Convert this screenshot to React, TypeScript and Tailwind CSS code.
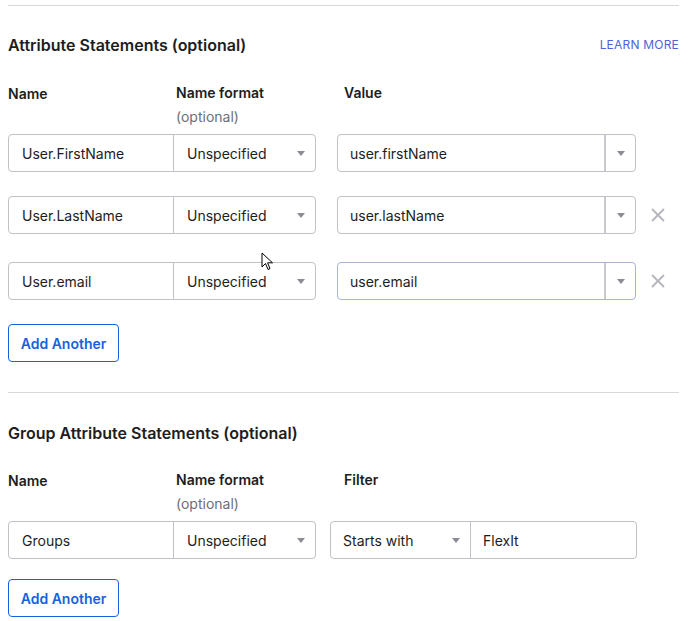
import React from "react";

const Caret = () => (
  <svg width="8" height="5" viewBox="0 0 8 5" className="shrink-0">
    <path d="M0 0 L8 0 L4 5 Z" fill="#8c8c96" />
  </svg>
);

const XIcon = () => (
  <svg width="14" height="14" viewBox="0 0 14 14">
    <path d="M1.5 1.5 L12.5 12.5 M12.5 1.5 L1.5 12.5" stroke="#b5b5bd" strokeWidth="1.8" strokeLinecap="round" />
  </svg>
);

const NameAndFormat = ({ name }: { name: string }) => (
  <div className="flex h-[38px] w-[308px] rounded-[4px] border border-[#c1c1c8]">
    <div className="flex w-[165px] items-center border-r border-[#c1c1c8] pl-[13px] text-[14px]">{name}</div>
    <div className="flex flex-1 items-center justify-between pl-[13px] pr-[10px] text-[14px]">
      <span>Unspecified</span>
      <Caret />
    </div>
  </div>
);

const ValueCombo = ({ value, focused }: { value: string; focused?: boolean }) => (
  <div className={`flex h-[38px] w-[299px] rounded-[4px] border ${focused ? "border-[#a9b4d4]" : "border-[#c1c1c8]"}`}>
    <div className="flex flex-1 items-center border-r-2 border-[#c8c8ce] pl-[12px] text-[14px]">{value}</div>
    <div className="flex w-[29px] items-center justify-center">
      <Caret />
    </div>
  </div>
);

const AttrRow = ({ name, value, removable, focused }: { name: string; value: string; removable?: boolean; focused?: boolean }) => (
  <div className="flex items-center">
    <NameAndFormat name={name} />
    <div className="ml-[21px]">
      <ValueCombo value={value} focused={focused} />
    </div>
    {removable && (
      <div className="ml-[15px] flex items-center">
        <XIcon />
      </div>
    )}
  </div>
);

const Headers = ({ third }: { third: string }) => (
  <div className="flex text-[14px] font-semibold">
    <div className="w-[168px]">Name</div>
    <div className="w-[168px]">
      <div className="h-[20px] leading-[20px]">Name format</div>
      <div className="mt-[4px] h-[20px] font-normal leading-[20px] text-[#6e6e78]">(optional)</div>
    </div>
    <div className="h-[20px] leading-[20px]">{third}</div>
  </div>
);

const AddButton = () => (
  <button className="flex h-[38px] w-[111px] items-center justify-center rounded-[4px] border border-[#1662dd] text-[14px] font-semibold text-[#1662dd]">
    Add Another
  </button>
);

export default function App() {
  return (
    <div className="relative h-[621px] w-[688px] overflow-hidden bg-white pl-[8px] font-['Inter',sans-serif] text-[#1d1d21]">
      <div className="h-[5px]" />
      <div className="w-[671px] border-t border-[#d7d7dc]" />
      <div className="mt-[29px] flex h-[20px] w-[671px] items-center justify-between">
        <div className="text-[16px] font-semibold">Attribute Statements (optional)</div>
        <a className="text-[12px] tracking-[0.2px] text-[#4f63d9]">LEARN MORE</a>
      </div>
      <div className="mt-[28px]">
        <Headers third="Value" />
      </div>
      <div className="mt-[7px] flex flex-col gap-[24px]">
        <AttrRow name="User.FirstName" value="user.firstName" />
        <AttrRow name="User.LastName" value="user.lastName" removable />
        <div className="mt-[4px]">
          <AttrRow name="User.email" value="user.email" removable focused />
        </div>
      </div>
      <div className="mt-[24px]">
        <AddButton />
      </div>
      <div className="mt-[30px] w-[671px] border-t border-[#d7d7dc]" />
      <div className="mt-[30px] flex h-[20px] items-center">
        <div className="text-[16px] font-semibold">Group Attribute Statements (optional)</div>
      </div>
      <div className="mt-[27px]">
        <Headers third="Filter" />
      </div>
      <div className="mt-[7px] flex items-center">
        <NameAndFormat name="Groups" />
        <div className="ml-[14px] flex h-[38px] w-[307px] rounded-[4px] border border-[#c1c1c8]">
          <div className="flex w-[140px] items-center justify-between border-r border-[#c1c1c8] pl-[12px] pr-[10px] text-[14px]">
            <span>Starts with</span>
            <Caret />
          </div>
          <div className="flex flex-1 items-center pl-[12px] text-[14px]">FlexIt</div>
        </div>
      </div>
      <div className="mt-[20px]">
        <AddButton />
      </div>
      <svg className="absolute left-[261px] top-[252px]" width="13" height="20" viewBox="0 0 13 20">
        <path d="M1 1 L1 15 L4.5 11.5 L7 17.5 L9 16.6 L6.6 10.8 L11.5 10.8 Z" fill="white" stroke="black" strokeWidth="1" strokeLinejoin="round" />
      </svg>
    </div>
  );
}
